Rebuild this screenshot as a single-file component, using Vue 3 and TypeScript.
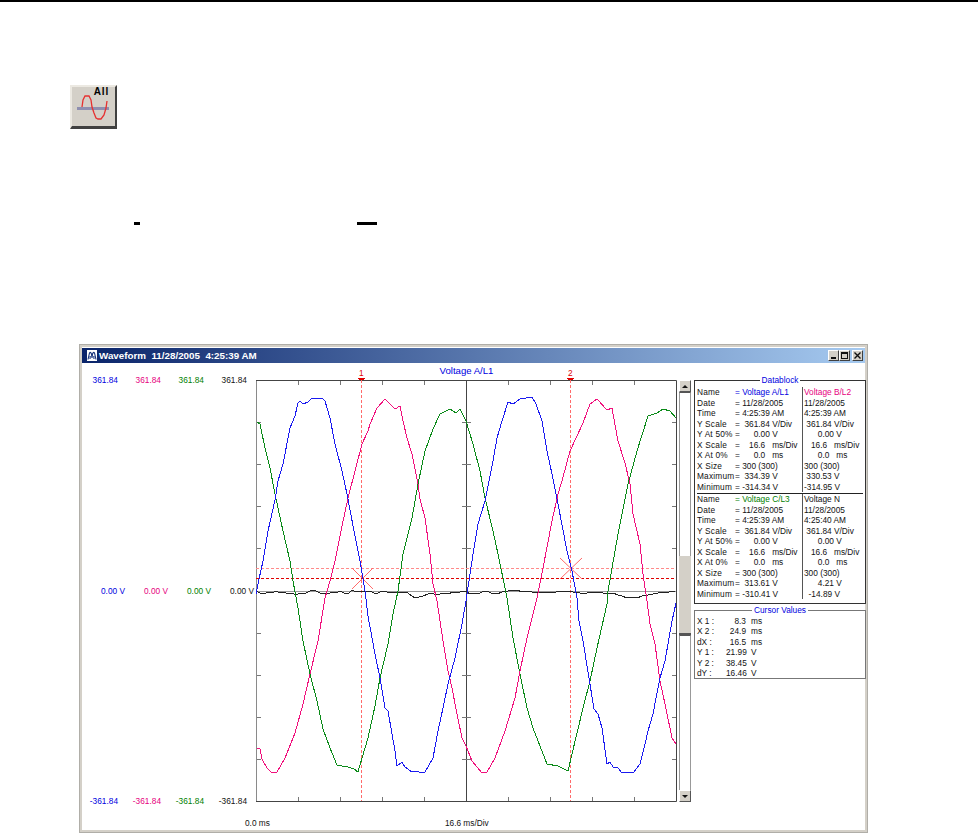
<script setup lang="ts">
type Row = { label: string; value: string; second: string }

const labels = ['Name', 'Date', 'Time', 'Y Scale', 'Y At 50%', 'X Scale', 'X At 0%', 'X Size', 'Maximum', 'Minimum']

function makeRows(values: string[], seconds: string[]): Row[] {
  return labels.map((label, i) => ({ label, value: values[i], second: seconds[i] }))
}

const sections = [
  {
    nameColor: '#0000e0',
    secondColor: '#e6007e',
    rows: makeRows(
      ['= Voltage A/L1', '= 11/28/2005', '= 4:25:39 AM', '=  361.84 V/Div', '=      0.00 V', '=    16.6   ms/Div', '=      0.0   ms', '= 300 (300)', '=  334.39 V', '= -314.34 V'],
      ['Voltage B/L2', '11/28/2005', '4:25:39 AM', ' 361.84 V/Div', '      0.00 V', '   16.6   ms/Div', '      0.0   ms', '300 (300)', ' 330.53 V', '-314.95 V'],
    ),
  },
  {
    nameColor: '#008000',
    secondColor: '#111',
    rows: makeRows(
      ['= Voltage C/L3', '= 11/28/2005', '= 4:25:39 AM', '=  361.84 V/Div', '=      0.00 V', '=    16.6   ms/Div', '=      0.0   ms', '= 300 (300)', '=  313.61 V', '= -310.41 V'],
      ['Voltage N', '11/28/2005', '4:25:40 AM', ' 361.84 V/Div', '      0.00 V', '   16.6   ms/Div', '      0.0   ms', '300 (300)', '      4.21 V', '  -14.89 V'],
    ),
  },
]

const cursorRows = [
  ['X 1 :', '8.3', 'ms'],
  ['X 2 :', '24.9', 'ms'],
  ['dX :', '16.5', 'ms'],
  ['Y 1 :', '21.99', 'V'],
  ['Y 2 :', '38.45', 'V'],
  ['dY :', '16.46', 'V'],
]

const channels = ['#0000e0', '#e6007e', '#008000', '#111']

// traces are in page pixels, the svg viewBox below starts at the plot corner
const bluePts =
  '256,593 259,578 263,560 268,530 275,499 278,480 283,463 290,427 295,415 298,402 300,400 303,403 308,401 312,397 322,397 325,400 330,417 335,443 342,470 347,493 354,530 360,560 365,590 368,615 375,653 380,677 385,707 388,710 395,750 397,765 402,761 405,766 412,771 417,770 421,772 425,771 433,757 438,730 443,707 448,683 455,657 462,623 466,600 473,553 478,523 485,500 493,460 497,437 502,420 508,401 513,403 520,398 532,396 536,403 542,420 547,450 552,473 558,503 567,550 572,570 577,597 579,620 583,640 589,677 594,708 598,713 602,727 607,763 610,761 613,766 618,767 622,772 628,771 633,772 640,763 645,743 648,730 653,713 656,697 660,677 665,660 672,620 676,602'
const pinkPts =
  '257,747 260,748 262,758 267,767 272,772 277,771 285,757 295,732 303,703 310,673 318,640 325,597 330,580 335,560 342,525 348,497 355,470 362,443 368,430 370,423 377,407 385,398 395,408 400,405 403,420 407,437 412,453 418,483 420,498 425,517 430,553 433,583 437,600 440,620 443,640 448,670 452,687 457,713 462,737 466,745 472,760 482,772 487,771 495,757 505,730 515,697 520,670 527,637 533,613 537,597 543,567 552,520 558,493 562,480 570,450 583,422 590,403 597,398 607,409 612,407 618,440 625,462 630,483 633,513 640,543 643,573 647,600 650,623 655,643 660,680 665,703 672,737 676,743'
const greenPts =
  '257,421 260,423 265,447 270,467 275,493 283,530 290,560 293,580 298,607 303,640 310,673 317,700 323,728 330,747 337,764 342,765 348,766 354,768 358,771 362,757 368,737 375,705 380,677 388,643 393,613 398,590 403,553 412,517 418,483 425,450 433,428 440,413 450,408 456,412 460,408 466,420 473,443 480,470 485,497 493,530 498,553 505,587 507,597 513,637 520,673 527,707 533,727 547,763 558,765 568,770 572,753 583,707 590,680 597,647 607,603 608,590 618,533 628,483 637,450 648,415 657,412 663,408 670,410 676,417'
const blackPts =
  '256,590 260,592 264,593 268,591 272,592 276,590 280,592 284,591 288,593 292,592 296,594 300,592 304,593 308,591 312,589 316,590 320,592 324,592 328,593 332,591 336,592 340,590 344,592 348,593 352,589 356,591 360,590 365,591 370,590 374,592 378,592 382,590 387,591 392,592 398,591 403,591 408,592 412,595 415,597 419,596 423,595 428,593 432,592 436,594 440,593 444,592 448,593 453,591 458,592 462,590 466,590 470,593 475,592 480,592 484,590 487,590 491,592 497,593 502,591 508,590 512,589 517,589 522,591 527,590 532,591 537,592 545,591 552,592 560,590 567,590 573,591 580,592 587,592 595,591 603,592 608,592 613,592 618,594 622,595 627,597 632,596 637,597 642,595 648,594 653,593 658,592 663,591 669,591 675,590'

const xTicks = [298, 340, 382, 424, 508, 550, 592, 634]
const yTicks = [421, 463, 505, 547, 632, 674, 716, 758]
</script>

<template>
  <div class="page">
    <div class="rule"></div>

    <div class="tool-button">
      <span class="all">All</span>
      <svg class="tool-wave" width="46" height="40" viewBox="70 85 46 40">
        <rect x="77" y="107" width="32" height="3" fill="#8f8fb0" />
        <path d="M82 107 L83 100 L85 96 L89 96 L91 100 L92 107 L94 113 L96 118 L98 119 L101 119 L104 115 L106 108 L107 101" fill="none" stroke="#e63030" stroke-width="1.3" />
      </svg>
    </div>

    <div class="dashes">
      <i class="dash short"></i>
      <i class="dash long"></i>
    </div>

    <div class="window">
      <div class="titlebar">
        <svg class="app-icon" width="10" height="11" viewBox="0 0 10 11">
          <rect width="10" height="11" fill="#fff" />
          <path d="M1 9.5 L2.5 3 Q3.5 1.5 4.5 4 L5 8 L5.5 4 Q6.5 1.5 7.5 3 L9 9.5 M3 9 L3.2 6 M7 9 L6.8 6" fill="none" stroke="#14307a" stroke-width="1.1" />
        </svg>
        <span class="title-text">Waveform&nbsp; 11/28/2005&nbsp; 4:25:39 AM</span>
        <div class="win-buttons">
          <button class="win-btn"><i class="min-glyph"></i></button>
          <button class="win-btn"><i class="max-glyph"></i></button>
          <button class="win-btn close">
            <svg width="7" height="7" viewBox="0 0 7 7"><path d="M0.5 0.5 L6.5 6.5 M6.5 0.5 L0.5 6.5" stroke="#111" stroke-width="1.4" /></svg>
          </button>
        </div>
      </div>

      <div class="content">
        <div class="scales">
          <div class="scale-row">
            <span v-for="c in channels" :key="c" :style="{ color: c }">361.84</span>
          </div>
          <div class="scale-row zero">
            <span v-for="c in channels" :key="c" :style="{ color: c }">0.00 V</span>
          </div>
          <div class="scale-row">
            <span v-for="c in channels" :key="c" :style="{ color: c }">-361.84</span>
          </div>
        </div>

        <div class="plot-col">
          <div class="plot-head">Voltage A/L1</div>
          <div class="plot-wrap">
            <span class="cursor-tag tag-1">1</span>
            <span class="cursor-tag tag-2">2</span>
            <svg class="plot" width="421" height="422" viewBox="256 379 421 422">
              <!-- frame and centre axis -->
              <path d="M256.5 379 V800" stroke="#8a8a8a" />
              <path d="M256 379.5 H676.5 V800.5 H256" fill="none" stroke="#444" />
              <path d="M466.5 379 V800" stroke="#444" />
              <path d="M256 590.5 H676" stroke="#9a9a9a" />
              <!-- ticks -->
              <g stroke="#777">
                <path v-for="x in xTicks" :key="'t' + x" :d="`M${x}.5 380 V384 M${x}.5 796 V800`" />
                <path v-for="y in yTicks" :key="'l' + y" :d="`M257 ${y}.5 H261 M462 ${y}.5 H471 M672 ${y}.5 H676`" />
              </g>
              <!-- cursors -->
              <g stroke="#ff6a6a" fill="none">
                <path d="M361.5 379 V800 M570.5 379 V800" stroke-dasharray="3 2" />
                <path d="M256 567.5 H676" stroke="#ff8a8a" stroke-dasharray="3 2" />
                <path d="M256 577.5 H676" stroke="#e00000" stroke-dasharray="3 2" />
                <path d="M352 567 L373 588 M373 567 L352 588" />
                <path d="M560 557 L582 578 M582 557 L560 578" />
              </g>
              <!-- traces -->
              <g fill="none" stroke-width="1" shape-rendering="crispEdges">
                <polyline :points="blackPts" stroke="#222" />
                <polyline :points="greenPts" stroke="#0a8a18" />
                <polyline :points="pinkPts" stroke="#f0107c" />
                <polyline :points="bluePts" stroke="#1a1af0" />
              </g>
              <!-- cursor markers on the top edge -->
              <path d="M358 377.5 H365 M359 378.5 H364 M567 377.5 H574 M568 378.5 H573" stroke="#e00000" />
            </svg>
          </div>
        </div>

        <div class="scrollbar">
          <div class="sb-arrow"><i class="arrow-up"></i></div>
          <div class="sb-track"></div>
          <div class="sb-thumb"></div>
          <div class="sb-track lower"></div>
          <div class="sb-arrow"><i class="arrow-down"></i></div>
        </div>

        <div class="panel">
          <fieldset class="box datablock">
            <legend>Datablock</legend>
            <div v-for="(section, s) in sections" :key="s" class="section">
              <div v-for="(row, r) in section.rows" :key="row.label" class="data-row">
                <span class="lbl">{{ row.label }}</span>
                <span class="val" :style="r === 0 ? { color: section.nameColor } : {}">{{ row.value }}</span>
                <span class="val sec" :style="r === 0 ? { color: section.secondColor } : {}">{{ row.second }}</span>
              </div>
            </div>
          </fieldset>
          <fieldset class="box cursors">
            <legend>Cursor Values</legend>
            <div v-for="row in cursorRows" :key="row[0]" class="cursor-row">
              <span>{{ row[0] }}</span>
              <span class="num">{{ row[1] }}</span>
              <span>{{ row[2] }}</span>
            </div>
          </fieldset>
        </div>
      </div>

      <div class="axis-foot">
        <span>0.0 ms</span>
        <span>16.6 ms/Div</span>
      </div>
    </div>
  </div>
</template>

<style scoped>
.page {
  width: 978px;
  height: 833px;
  overflow: hidden;
  background: #fff;
  font-family: "Liberation Sans", Arial, sans-serif;
  font-size: 8.3px;
  color: #111;
}

.rule {
  height: 2px;
  background: #000;
}

.tool-button {
  position: relative;
  box-sizing: border-box;
  width: 47px;
  height: 44px;
  margin: 83px 0 0 70px;
  background: #d4d0c8;
  border-top: 2px solid #ece9e2;
  border-left: 2px solid #ece9e2;
  border-right: 2px solid #404040;
  border-bottom: 3px solid #404040;
}

.all {
  position: absolute;
  top: 0;
  right: 6px;
  font-size: 10px;
  line-height: 10px;
  font-weight: bold;
  letter-spacing: 0.8px;
  color: #000;
}

.tool-wave {
  position: absolute;
  top: -2px;
  left: -2px;
}

.dashes {
  display: flex;
  align-items: center;
  gap: 217px;
  margin: 93px 0 0 134px;
  height: 3px;
}

.dash {
  display: block;
  height: 3px;
  background: #000;
}

.short { width: 6px; }
.long { width: 20px; }

.window {
  box-sizing: border-box;
  width: 789px;
  height: 489px;
  margin: 119px 0 0 79px;
  border: 3px solid #d4d0c8;
  outline: 1px solid #b0aea8;
  outline-offset: -1px;
  background: #fff;
}

.titlebar {
  display: flex;
  align-items: center;
  height: 15px;
  margin-top: 1px;
  padding: 0 2px 0 5px;
  background: linear-gradient(90deg, #0a246a, #a6caf0);
}

.app-icon { flex: none; }

.title-text {
  margin-left: 2px;
  font-size: 9.8px;
  font-weight: bold;
  color: #fff;
}

.win-buttons {
  display: flex;
  margin-left: auto;
}

.win-btn {
  display: flex;
  align-items: center;
  justify-content: center;
  box-sizing: border-box;
  width: 11px;
  height: 11px;
  margin: 0;
  padding: 0;
  background: #d4d0c8;
  border: 1px solid;
  border-color: #fff #404040 #404040 #fff;
}

.close { margin-left: 2px; }

.min-glyph {
  display: block;
  width: 5px;
  height: 2px;
  margin-top: 5px;
  background: #111;
}

.max-glyph {
  display: block;
  box-sizing: border-box;
  width: 7px;
  height: 7px;
  border: 1px solid #111;
  border-top-width: 2px;
}

.content {
  display: flex;
  align-items: flex-start;
  height: 439px;
}

.scales {
  display: flex;
  flex-direction: column;
  justify-content: space-between;
  flex: none;
  width: 174px;
  height: 431px;
  margin-top: 12px;
}

.scale-row {
  display: grid;
  grid-template-columns: repeat(4, 43px);
  justify-content: end;
  height: 10px;
  line-height: 10px;
  padding-right: 9px;
  text-align: right;
}

.scale-row.zero { padding-right: 2px; }

.plot-col {
  flex: none;
  width: 421px;
}

.plot-head {
  height: 16px;
  padding-bottom: 1px;
  font-size: 9.6px;
  line-height: 16px;
  text-align: center;
  color: #0000e0;
}

.plot-wrap { position: relative; }

.plot {
  display: block;
  overflow: visible;
}

.cursor-tag {
  position: absolute;
  top: -11px;
  color: #e00000;
  line-height: 9px;
}

.tag-1 { left: 103px; }
.tag-2 { left: 312px; }

.scrollbar {
  display: flex;
  flex-direction: column;
  flex: none;
  width: 12px;
  height: 422px;
  margin: 17px 0 0 2px;
  background: #fff;
}

.sb-arrow {
  display: flex;
  align-items: center;
  justify-content: center;
  box-sizing: border-box;
  flex: none;
  height: 12px;
  background: #d4d0c8;
  border: 1px solid;
  border-color: #fff #555 #555 #fff;
}

.arrow-up,
.arrow-down {
  display: block;
  border-left: 3px solid transparent;
  border-right: 3px solid transparent;
}

.arrow-up { border-bottom: 3px solid #111; }
.arrow-down { border-top: 3px solid #111; }

.sb-track {
  flex: none;
  box-sizing: border-box;
  height: 164px;
  border-left: 1px solid #999;
  border-right: 1px solid #999;
  border-top: 1px solid #555;
}

.sb-track.lower {
  flex: 1;
  height: auto;
}

.sb-thumb {
  flex: none;
  box-sizing: border-box;
  height: 79px;
  background: #d4d0c8;
  border-bottom: 2px solid #555;
}

.panel {
  flex: none;
  width: 172px;
  margin: 12px 0 0 3px;
}

.box {
  box-sizing: border-box;
  min-width: 0;
  margin: 0;
  padding: 0;
  border: 1px solid #333;
}

.box legend {
  height: 10px;
  margin: 0 auto;
  padding: 0 2px;
  line-height: 10px;
  color: #0000e0;
}

.datablock {
  height: 229px;
  padding: 2px 2px 5px 2px;
}

.section + .section {
  margin-top: 1px;
  border-top: 1px solid #222;
}

.data-row {
  display: grid;
  grid-template-columns: 38px 67px 1fr;
  height: 10.5px;
  line-height: 10.5px;
  white-space: pre;
}

.lbl { letter-spacing: 0.2px; }

.val { overflow: hidden; }

.sec {
  padding-left: 1px;
  border-left: 1px solid #555;
}

.cursors {
  height: 74px;
  margin-top: 1px;
  padding: 1px 2px 0;
  border-color: #777;
}

.cursor-row {
  display: grid;
  grid-template-columns: 24px 20px auto;
  justify-content: start;
  column-gap: 5px;
  height: 10.4px;
  line-height: 10.4px;
}

.num { text-align: right; }

.axis-foot {
  display: flex;
  gap: 175px;
  height: 12px;
  margin-top: 15px;
  padding-left: 163px;
  line-height: 12px;
}
</style>
